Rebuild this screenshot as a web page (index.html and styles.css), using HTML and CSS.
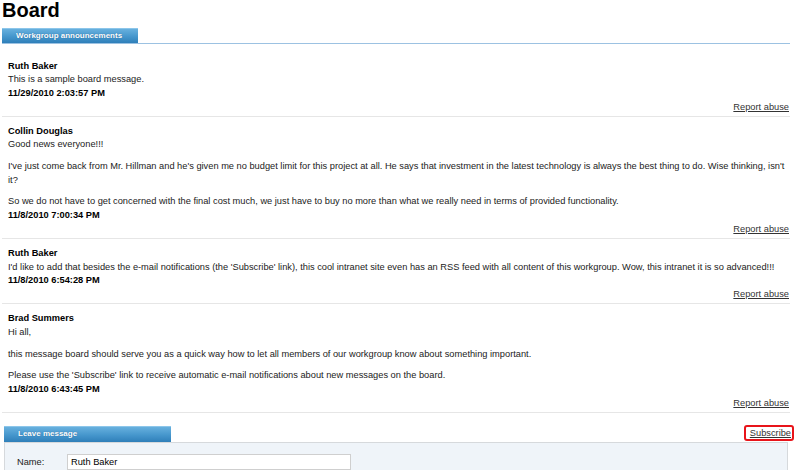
FILE: index.html
```html
<!DOCTYPE html>
<html>
<head>
<meta charset="utf-8">
<link rel="stylesheet" href="styles.css">
</head>
<body>
<h1 class="title">Board</h1>
<div class="tabbar"><span class="tab">Workgroup announcements</span></div>
<div class="messages">
  <div class="msg first">
    <div class="name">Ruth Baker</div>
    <div class="body"><p>This is a sample board message.</p></div>
    <div class="date">11/29/2010 2:03:57 PM</div>
    <div class="actions"><a href="#">Report abuse</a></div>
  </div>
  <div class="msg">
    <div class="name">Collin Douglas</div>
    <div class="body">
      <p>Good news everyone!!!</p>
      <p>I've just come back from Mr. Hillman and he's given me no budget limit for this project at all. He says that investment in the latest technology is always the best thing to do. Wise thinking, isn't it?</p>
      <p>So we do not have to get concerned with the final cost much, we just have to buy no more than what we really need in terms of provided functionality.</p>
    </div>
    <div class="date">11/8/2010 7:00:34 PM</div>
    <div class="actions"><a href="#">Report abuse</a></div>
  </div>
  <div class="msg">
    <div class="name">Ruth Baker</div>
    <div class="body"><p>I'd like to add that besides the e-mail notifications (the 'Subscribe' link), this cool intranet site even has an RSS feed with all content of this workgroup. Wow, this intranet it is so advanced!!!</p></div>
    <div class="date">11/8/2010 6:54:28 PM</div>
    <div class="actions"><a href="#">Report abuse</a></div>
  </div>
  <div class="msg">
    <div class="name">Brad Summers</div>
    <div class="body">
      <p>Hi all,</p>
      <p>this message board should serve you as a quick way how to let all members of our workgroup know about something important.</p>
      <p>Please use the 'Subscribe' link to receive automatic e-mail notifications about new messages on the board.</p>
    </div>
    <div class="date">11/8/2010 6:43:45 PM</div>
    <div class="actions"><a href="#">Report abuse</a></div>
  </div>
</div>
<div class="leave-head">
  <span class="tab tab-leave">Leave message</span>
  <a class="subscribe" href="#">Subscribe</a>
</div>
<div class="form">
  <div class="form-row">
    <label class="label">Name:</label>
    <div class="input">Ruth Baker</div>
  </div>
</div>
</body>
</html>
```
FILE: styles.css
```css
html, body {
  margin: 0;
  padding: 0;
  background: #fff;
}
body {
  font-family: "Liberation Sans", Arial, sans-serif;
  font-size: 9.27px;
  line-height: 13.3px;
  color: #222;
  overflow: hidden;
}
.title {
  margin: 0 0 0 2px;
  font-size: 20px;
  line-height: 20px;
  font-weight: bold;
  color: #000;
}
.tabbar {
  margin: 8px 7px 0 2px;
  border-bottom: 1px solid #9cc2e2;
  display: flex;
  height: 15px;
}
.tab {
  display: block;
  width: 136px;
  height: 15px;
  box-sizing: border-box;
  padding-left: 14px;
  background: linear-gradient(#67b0de, #4596cc 55%, #2f7fb9);
  border-top: 1px solid #8cc6ea;
  color: #fff;
  font-weight: bold;
  font-size: 8px;
  line-height: 13px;
  text-shadow: 0 0 1px #1d5f92;
}
.messages {
  margin-left: 2px;
  width: 788px;
}
.msg {
  padding: 8px 1px 2px 6px;
  border-bottom: 1px solid #e6e6e6;
}
.msg.first {
  padding-top: 16px;
}
.name, .date {
  font-weight: bold;
  color: #000;
}
.body p {
  margin: 8.5px 0 0 0;
}
.body p:first-child {
  margin-top: 0;
}
.actions {
  margin-top: 1px;
  text-align: right;
}
.actions a, .subscribe {
  color: #333;
  text-decoration: underline;
}
.leave-head {
  margin: 13px 3px 0 4px;
  display: flex;
  justify-content: space-between;
  align-items: flex-end;
  height: 16px;
}
.tab-leave {
  width: 167px;
  height: 16px;
  line-height: 14px;
  padding-left: 14px;
}
.subscribe {
  display: block;
  border: 2px solid #e8141a;
  border-radius: 3px;
  padding: 0 1px 0 4px;
  line-height: 12px;
  height: 12px;
  margin-bottom: 1px;
}
.form {
  margin: 0 9px 0 4px;
  background: #eff4f9;
  border: 1px solid #d6d9dc;
  height: 40px;
}
.form-row {
  display: flex;
  align-items: center;
  margin-top: 11px;
  padding-left: 12px;
}
.label {
  width: 50px;
  color: #222;
}
.input {
  width: 284px;
  height: 16px;
  box-sizing: border-box;
  background: #fff;
  border: 1px solid #cfcfcf;
  padding-left: 3px;
  line-height: 14px;
  color: #000;
}
```
